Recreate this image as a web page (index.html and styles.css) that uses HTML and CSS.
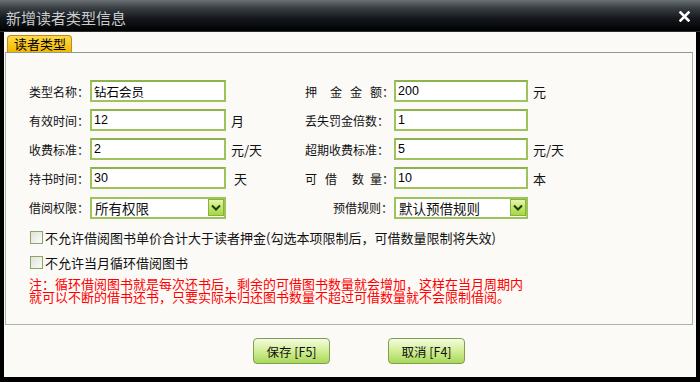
FILE: index.html
```html
<!DOCTYPE html>
<html lang="zh-CN">
<head>
  <meta charset="UTF-8" />
  <title>新增读者类型信息</title>
  <link rel="stylesheet" href="styles.css">
</head>
<body>

<div class="window">
  <div class="titlebar">
    <span class="title">新增读者类型信息</span>
    <svg class="close" width="11" height="11" viewBox="0 0 11 11"><path d="M1.5 1.5 L9.5 9.5 M9.5 1.5 L1.5 9.5" stroke="#fff" stroke-width="2.6" stroke-linecap="square"/></svg>
  </div>

  <div class="content">
    <div class="tab">读者类型</div>

    <div class="panel">
      <div class="form">
        <label class="lbl">类型名称：</label>
        <input class="field" type="text" value="钻石会员">
        <span class="unit"></span>
        <label class="lbl">押<i class="sp" style="width:13px"></i>金<i class="sp" style="width:8px"></i>金<i class="sp" style="width:8px"></i>额：</label>
        <input class="field" type="text" value="200">
        <span class="unit">元</span>

        <label class="lbl">有效时间：</label>
        <input class="field" type="text" value="12">
        <span class="unit">月</span>
        <label class="lbl">丢失罚金倍数：</label>
        <input class="field" type="text" value="1">
        <span class="unit"></span>

        <label class="lbl">收费标准：</label>
        <input class="field" type="text" value="2">
        <span class="unit">元/天</span>
        <label class="lbl">超期收费标准：</label>
        <input class="field" type="text" value="5">
        <span class="unit">元/天</span>

        <label class="lbl">持书时间：</label>
        <input class="field" type="text" value="30">
        <span class="unit pad">天</span>
        <label class="lbl">可<i class="sp" style="width:8px"></i>借<i class="sp" style="width:15px"></i>数<i class="sp" style="width:6px"></i>量：</label>
        <input class="field" type="text" value="10">
        <span class="unit">本</span>

        <label class="lbl">借阅权限：</label>
        <div class="select">
          <span>所有权限</span>
          <span class="arrow"><svg width="10" height="8" viewBox="0 0 10 8"><path d="M1 1.5 L5 5.5 L9 1.5" fill="none" stroke="#1d3a08" stroke-width="2"/></svg></span>
        </div>
        <span class="unit"></span>
        <label class="lbl right">预借规则：</label>
        <div class="select">
          <span>默认预借规则</span>
          <span class="arrow"><svg width="10" height="8" viewBox="0 0 10 8"><path d="M1 1.5 L5 5.5 L9 1.5" fill="none" stroke="#1d3a08" stroke-width="2"/></svg></span>
        </div>
        <span class="unit"></span>
      </div>

      <div class="check-row first">
        <span class="box"></span>
        <span>不允许借阅图书单价合计大于读者押金(勾选本项限制后，可借数量限制将失效)</span>
      </div>
      <div class="check-row">
        <span class="box"></span>
        <span>不允许当月循环借阅图书</span>
      </div>

      <p class="note">注：循环借阅图书就是每次还书后，剩余的可借图书数量就会增加，这样在当月周期内<br>就可以不断的借书还书，只要实际未归还图书数量不超过可借数量就不会限制借阅。</p>
    </div>

    <div class="buttons">
      <button class="btn">保存 [F5]</button>
      <button class="btn">取消 [F4]</button>
    </div>
  </div>
</div>

</body>
</html>
```

FILE: styles.css
```css
body {
  margin: 0;
  padding: 0;
  font-family: "Noto Sans CJK SC", "Liberation Sans", sans-serif;
  font-size: 12px;
  color: #111;
}
.window {
  width: 700px;
  height: 382px;
  box-sizing: border-box;
  background-color: #000;
  padding: 0 4px 5px 4px;
  display: flex;
  flex-direction: column;
}
.titlebar {
  height: 32px;
  margin: 0 -4px;
  background: linear-gradient(#6b7074 0%, #3a3f44 25%, #14181c 60%, #000 100%);
  border-bottom: 1px solid #2a2e31;
  box-sizing: border-box;
  display: flex;
  align-items: center;
  justify-content: space-between;
  padding: 0 10px 0 6px;
}
.title {
  color: #c9cbcc;
  font-size: 15px;
  margin-top: 4px;
}
.close {
  margin-top: 2px;
}
.content {
  flex: 1;
  background-color: #fbfaf7;
  padding: 3px 0 0 0;
  display: flex;
  flex-direction: column;
}
.tab {
  align-self: flex-start;
  margin-left: 3px;
  height: 17px;
  line-height: 16px;
  padding: 0 5px 0 6px;
  font-size: 13px;
  background: linear-gradient(#ffd94a, #f2b800);
  border: 1px solid #c48a10;
  border-bottom: none;
  border-radius: 4px 4px 0 0;
  box-sizing: border-box;
  color: #000;
}
.panel {
  margin-left: 1px;
  width: 688px;
  height: 273px;
  box-sizing: border-box;
  border: 1px solid #a9b3a6;
  border-top-color: #8f9c8c;
  padding: 27px 0 0 23px;
}
.form {
  display: grid;
  grid-template-columns: 61px 136px 79px 89px 134px 80px;
  grid-auto-rows: 22px;
  row-gap: 7px;
  align-items: center;
}
.form .select {
  margin-top: 1px;
}
.lbl {
  font-size: 12px;
  white-space: nowrap;
}
.lbl.right {
  text-align: right;
  padding-right: 1px;
}
.sp {
  display: inline-block;
}
.field {
  height: 22px;
  box-sizing: border-box;
  border: 2px solid #9cc45a;
  border-top-color: #8db44c;
  background: #fff;
  padding: 0 2px;
  font-family: "Liberation Sans", "Noto Sans CJK SC", sans-serif;
  font-size: 12.5px;
  color: #000;
  outline: none;
  margin: 0;
}
.unit {
  padding-left: 5px;
  font-size: 13px;
}
.unit.pad {
  padding-left: 8px;
}
.select {
  height: 22px;
  box-sizing: border-box;
  border: 2px solid #9cc45a;
  background: #fff;
  display: flex;
  align-items: center;
  justify-content: space-between;
  padding-left: 3px;
  font-size: 13.5px;
}
.arrow {
  width: 16px;
  height: 17px;
  background: linear-gradient(#e4f6a8, #a5d640);
  border: 1px solid #86b33c;
  box-sizing: border-box;
  display: flex;
  align-items: center;
  justify-content: center;
}
.check-row {
  display: flex;
  align-items: center;
  gap: 2px;
  height: 16px;
  margin-top: 9px;
  margin-left: 1px;
  font-size: 13px;
}
.check-row.first {
  margin-top: 11px;
}
.box {
  width: 13px;
  height: 13px;
  box-sizing: border-box;
  border: 1px solid #8ba66a;
  background: linear-gradient(135deg, #e2e2dc, #fbfbf8);
}
.note {
  margin: 7px 0 0 0;
  color: #ff0000;
  font-size: 13px;
  line-height: 13px;
}
.buttons {
  display: flex;
  justify-content: center;
  gap: 58px;
  padding-left: 18px;
  margin-top: 13px;
}
.btn {
  width: 77px;
  height: 26px;
  border: 1px solid #7f9e52;
  border-radius: 4px;
  background: linear-gradient(#f4fbe2 0%, #d6f09a 45%, #a9d85a 100%);
  font-family: "Noto Sans CJK SC", sans-serif;
  font-size: 12.5px;
  color: #111;
  padding: 0;
}
```
